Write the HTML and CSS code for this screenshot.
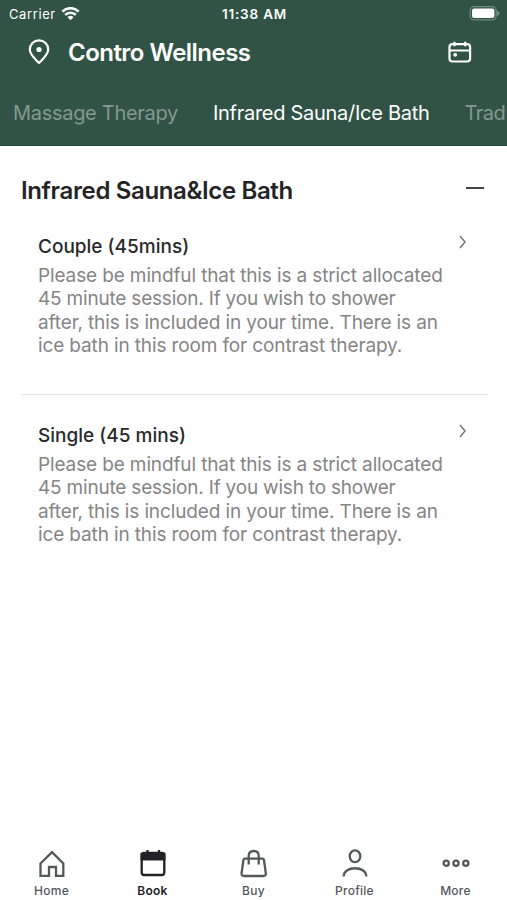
FILE: index.html
```html
<!DOCTYPE html>
<html lang="en">
<head>
<meta charset="utf-8">
<title>Contro Wellness</title>
<link rel="stylesheet" href="styles.css">
</head>
<body>
<div class="app">
  <header class="header">
    <div class="status">
      <div class="carrier"><span>Carrier</span>
        <svg width="19" height="14" viewBox="0 0 18 14" fill="none" stroke="#fff" stroke-width="2.6"><path d="M.8 4.600a11.600 11.600 0 0 1 16.400 0M3.700 7.900a7.500 7.500 0 0 1 10.600 0"/><path d="M9 13.300 6 10.300a4.300 4.300 0 0 1 6 0z" fill="#fff" stroke="none"/></svg>
      </div>
      <span class="clock">11:38 AM</span>
      <svg class="battery" width="31" height="15" viewBox="0 0 31 15"><rect x="1.200" y=".7" width="26" height="13.200" rx="4" fill="none" stroke="#6f897d" stroke-width="1.300"/><rect x="3" y="2.600" width="22.400" height="9.400" rx="2" fill="#fff"/><path d="M28.300 4.800q2 .8 2 2.500t-2 2.500z" fill="#839a8f"/></svg>
    </div>
    <div class="titlebar">
      <svg class="pin" width="22" height="26" viewBox="0 0 22 26" fill="none" stroke="#fff" stroke-width="2.200"><path d="M11 24C8 20.800 1.800 15.800 1.800 10.500a9.200 9.200 0 0 1 18.400 0c0 5.300-6.200 10.300-9.200 13.500z" stroke-linejoin="round"/><circle cx="11" cy="10.500" r="2.600" fill="#fff" stroke="none"/></svg>
      <h1>Contro Wellness</h1>
      <svg class="cal" width="24" height="22" viewBox="0 0 24 22" fill="none" stroke="#fff" stroke-width="2.200"><rect x="1.500" y="3.200" width="20.600" height="17.300" rx="3"/><path d="M1.500 9.500h20.600M6.500 .8v4.500M17.200 .8v4.500"/><circle cx="7.200" cy="13.800" r="1.900" fill="#fff" stroke="none"/></svg>
    </div>
    <nav class="tabs"><span>Massage Therapy</span><span class="on">Infrared Sauna/Ice Bath</span><span>Trad</span></nav>
  </header>
  <main>
    <div class="section"><h2>Infrared Sauna&amp;Ice Bath</h2><span class="minus"></span></div>
    <article class="item">
      <div class="row"><h3>Couple (45mins)</h3><svg width="8" height="14" viewBox="0 0 8 14" fill="none" stroke="#777" stroke-width="1.500"><path d="M1 1l5 6-5 6"/></svg></div>
      <p>Please be mindful that this is a strict allocated<br><span class="tight">45 minute session. If you wish to shower</span><br>after, this is included in your time. There is an<br>ice bath in this room for contrast therapy.</p>
    </article>
    <article class="item">
      <div class="row"><h3>Single (45 mins)</h3><svg width="8" height="14" viewBox="0 0 8 14" fill="none" stroke="#777" stroke-width="1.500"><path d="M1 1l5 6-5 6"/></svg></div>
      <p>Please be mindful that this is a strict allocated<br><span class="tight">45 minute session. If you wish to shower</span><br>after, this is included in your time. There is an<br>ice bath in this room for contrast therapy.</p>
    </article>
  </main>
  <nav class="bottom">
    <a><svg width="30" height="30" viewBox="0 0 30 30"><path d="M3.500 14.500 15 3.200l11.300 11.300v12.300H19v-8.800h-7v8.800H3.500z"/></svg><span>Home</span></a>
    <a class="on"><svg width="30" height="30" viewBox="0 0 30 30"><rect x="3.700" y="4" width="22.600" height="22" rx="2.500"/><path d="M3.700 5h22.600v5.300H3.700z" fill="#222326"/><path d="M9.500 1v4M21 1v4"/></svg><span>Book</span></a>
    <a><svg width="30" height="30" viewBox="0 0 30 30"><path d="M5.700 9.700h18q1 0 1.200 1l1.900 13.500q.3 2.800-2.500 2.800H5.100q-2.800 0-2.500-2.800l1.900-13.500q.2-1 1.200-1zM9.700 15.500V7q0-5 5-5t5 5v8.500"/></svg><span>Buy</span></a>
    <a><svg width="30" height="30" viewBox="0 0 30 30"><ellipse cx="15" cy="7.300" rx="5.300" ry="5.900"/><path d="M3.700 27.500c0-11 22.600-11 22.600 0"/></svg><span>Profile</span></a>
    <a><svg width="30" height="30" viewBox="0 0 30 30"><circle cx="5.200" cy="14.200" r="2.600"/><circle cx="15" cy="14.200" r="2.600"/><circle cx="24.800" cy="14.200" r="2.600"/></svg><span>More</span></a>
  </nav>
</div>
</body>
</html>
```
FILE: styles.css
```css
* { box-sizing: border-box; }
body { margin: 0; background: #fff; font-family: Inter, "Liberation Sans", sans-serif; }
h1, h2, h3, p { margin: 0; }
svg { display: block; flex: none; }
.app { width: 507px; height: 900px; display: flex; flex-direction: column; overflow: hidden; }
.header { height: 146px; background: #315345; color: #fff; border-bottom: 1px solid #26483a; flex: none; }
.status { height: 27px; display: grid; grid-template-columns: 1fr auto 1fr; align-items: center; padding: 0 7px 0 9px; font-size: 13px; }
.carrier { display: flex; align-items: center; gap: 5px; letter-spacing: .6px; }
.clock { font-weight: 600; font-size: 13.5px; letter-spacing: .8px; }
.battery { justify-self: end; }
.titlebar { height: 50px; display: flex; align-items: center; padding: 0 35px 0 28px; }
.titlebar h1 { font-size: 24px; line-height: 30px; font-weight: 600; margin-left: 18px; letter-spacing: -.53px; padding-top: 1px; }
.cal { margin-left: auto; }
.tabs { display: flex; height: 68px; padding: 22px 0 0 13px; gap: 35px; font-size: 20px; line-height: 28px; white-space: nowrap; color: #83998f; letter-spacing: -.3px; }
.tabs .on { color: #fff; letter-spacing: -.28px; }
.tabs .on + span { letter-spacing: -.5px; }
main { flex: 1; padding: 30px 19px 0 21px; }
.section { display: flex; justify-content: space-between; height: 30px; }
.section h2 { font-size: 24px; line-height: 30px; font-weight: 600; color: #242426; letter-spacing: -.36px; }
.minus { width: 18px; height: 2px; background: #444; margin: 11px 4px 0 0; }
.item { height: 189px; padding: 29px 21px 0 17px; border-bottom: 1px solid #e7e7e7; }
.item:last-child { border: 0; }
.row { display: flex; justify-content: space-between; height: 24px; }
.row h3 { font-size: 19px; line-height: 24px; font-weight: 500; color: #29292b; }
.item p { margin-top: 5px; font-size: 19px; line-height: 23.4px; color: #858585; white-space: nowrap; letter-spacing: -.13px; }
.item p .tight { letter-spacing: -.2px; }
.bottom { display: flex; height: 52px; flex: none; padding-left: 1px; }
.bottom a { width: 101px; display: flex; flex-direction: column; align-items: center; color: #55585b; font-size: 12px; line-height: 16px; font-weight: 500; letter-spacing: .25px; }
.bottom svg { fill: none; stroke: #55585b; stroke-width: 2.3; margin: 1px 0 4px; }
.bottom .on { color: #222326; font-weight: 600; }
.bottom .on svg { stroke: #222326; }
```
